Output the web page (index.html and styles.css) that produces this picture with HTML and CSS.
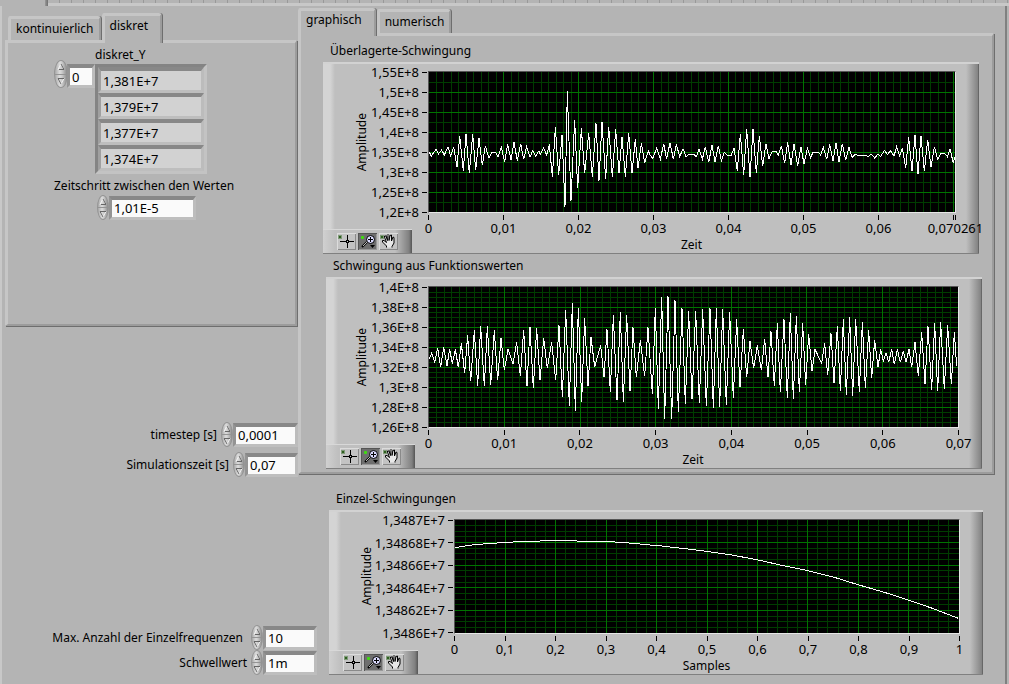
FILE: index.html
```html
<!DOCTYPE html>
<html lang="de">
<head>
<meta charset="utf-8">
<meta name="viewport" content="width=device-width, initial-scale=1">
<title>Schwingungen</title>
<link rel="stylesheet" href="styles.css">
</head>
<body>
<svg class="sprites" aria-hidden="true">
  <symbol id="up" viewBox="0 0 8 8"><path d="M1 6.500L4 1L7 6.500" fill="none" stroke="#f4f4f4"/><path d="M4 1L7 6.500H2" fill="none" stroke="#666"/></symbol>
  <symbol id="down" viewBox="0 0 8 8"><path d="M7 1.500L4 7L1 1.500" fill="none" stroke="#f4f4f4"/><path d="M7 1.500H1L4 7" fill="none" stroke="#666"/></symbol>
  <symbol id="cross" viewBox="0 0 19 17"><rect x="1" y="2" width="4" height="4" fill="#7f9a78"/><rect x="2" y="3" width="2" height="2" fill="#2f5f20"/><path d="M3 8.500H9M12 8.500H17M10.500 2V7M10.500 10V15" stroke="#000"/><rect x="9.500" y="7.500" width="2" height="2" fill="#ccc" stroke="#000"/></symbol>
  <symbol id="zoom" viewBox="0 0 19 17"><path d="M4.500 3V6M3 4.500H6" stroke="#3fdc10" stroke-width="2"/><path d="M4 14L9 9" stroke="#000" stroke-width="2"/><path d="M5 13L9 9" stroke="#bbb"/><circle cx="12.500" cy="6.500" r="4" fill="#dcdcff" stroke="#000"/><path d="M12.500 4V9M10 6.500H15" stroke="#000"/><path d="M12 12H17L14.500 15Z"/></symbol>
  <symbol id="hand" viewBox="0 0 19 17"><rect x="1" y="2" width="4" height="4" fill="#7f9a78"/><rect x="2" y="3" width="2" height="2" fill="#2f5f20"/><path d="M7.500 14.500V13L3.500 9V7.500H5L7.500 9.500L5.500 4V3H7L8.500 7.500L8 2.500L9 1.500L10 2.500V7.500L11 2.500L12.500 2V8L14 4L15 4.500V10L13 13.500V14.500" fill="#e8e8e8" stroke="#000"/></symbol>
</svg>
<div class="strip"><span class="strip-tab"></span><span class="strip-line"></span></div>
<main class="window">
  <div class="upper">
    <section class="left">
      <div class="tabs tabs-left" role="tablist">
        <button class="tab" role="tab" type="button">kontinuierlich</button>
        <button class="tab selected" role="tab" type="button" aria-selected="true">diskret</button>
      </div>
      <div class="page page-left">
        <div class="array">
          <label class="array-title" for="index">diskret_Y</label>
          <div class="spin"><button type="button" aria-label="Index erhöhen"><svg><use href="#up"/></svg></button><button type="button" aria-label="Index verringern"><svg><use href="#down"/></svg></button></div>
          <input class="field w-index" id="index" value="0">
          <div class="cells">
            <input class="cell" aria-label="Wert 0" readonly value="1,381E+7">
            <input class="cell" aria-label="Wert 1" readonly value="1,379E+7">
            <input class="cell" aria-label="Wert 2" readonly value="1,377E+7">
            <input class="cell" aria-label="Wert 3" readonly value="1,374E+7">
          </div>
        </div>
        <label class="step-title" for="step">Zeitschritt zwischen den Werten</label>
        <div class="row row-step">
          <div class="spin"><button type="button" aria-label="Zeitschritt erhöhen"><svg><use href="#up"/></svg></button><button type="button" aria-label="Zeitschritt verringern"><svg><use href="#down"/></svg></button></div>
          <input class="field w-step" id="step" value="1,01E-5">
        </div>
      </div>
      <div class="params">
        <div class="row"><label for="ts">timestep [s]</label>
          <div class="spin"><button type="button" aria-label="timestep erhöhen"><svg><use href="#up"/></svg></button><button type="button" aria-label="timestep verringern"><svg><use href="#down"/></svg></button></div>
          <input class="field w-ts" id="ts" value="0,0001"></div>
        <div class="row"><label for="sim">Simulationszeit [s]</label>
          <div class="spin"><button type="button" aria-label="Simulationszeit erhöhen"><svg><use href="#up"/></svg></button><button type="button" aria-label="Simulationszeit verringern"><svg><use href="#down"/></svg></button></div>
          <input class="field w-sim" id="sim" value="0,07"></div>
      </div>
    </section>
    <section class="right">
      <div class="tabs" role="tablist">
        <button class="tab selected" role="tab" type="button" aria-selected="true">graphisch</button>
        <button class="tab" role="tab" type="button">numerisch</button>
      </div>
      <div class="page page-right">
        <figure class="graph graph-sum">
          <figcaption>Überlagerte-Schwingung</figcaption>
          <div class="frame">
            <span class="y-title">Amplitude</span>
            <ol class="y-axis"><li>1,55E+8</li><li>1,5E+8</li><li>1,45E+8</li><li>1,4E+8</li><li>1,35E+8</li><li>1,3E+8</li><li>1,25E+8</li><li>1,2E+8</li></ol>
            <svg class="plot" id="plot-sum" role="img" aria-label="Überlagerte-Schwingung"></svg>
            <div class="toolbar"><button type="button" aria-label="Cursor"><svg><use href="#cross"/></svg></button><button class="on" type="button" aria-label="Zoom"><svg><use href="#zoom"/></svg></button><button type="button" aria-label="Verschieben"><svg><use href="#hand"/></svg></button></div>
            <div class="x-part">
              <ol class="x-axis"><li><span>0</span></li><li><span>0,01</span></li><li><span>0,02</span></li><li><span>0,03</span></li><li><span>0,04</span></li><li><span>0,05</span></li><li><span>0,06</span></li><li class="rest"><span></span></li><li><span>0,070261</span></li></ol>
              <span class="x-title">Zeit</span>
            </div>
          </div>
        </figure>
        <figure class="graph graph-func">
          <figcaption>Schwingung aus Funktionswerten</figcaption>
          <div class="frame">
            <span class="y-title">Amplitude</span>
            <ol class="y-axis"><li>1,4E+8</li><li>1,38E+8</li><li>1,36E+8</li><li>1,34E+8</li><li>1,32E+8</li><li>1,3E+8</li><li>1,28E+8</li><li>1,26E+8</li></ol>
            <svg class="plot" id="plot-func" role="img" aria-label="Schwingung aus Funktionswerten"></svg>
            <div class="toolbar"><button type="button" aria-label="Cursor"><svg><use href="#cross"/></svg></button><button class="on" type="button" aria-label="Zoom"><svg><use href="#zoom"/></svg></button><button type="button" aria-label="Verschieben"><svg><use href="#hand"/></svg></button></div>
            <div class="x-part">
              <ol class="x-axis"><li><span>0</span></li><li><span>0,01</span></li><li><span>0,02</span></li><li><span>0,03</span></li><li><span>0,04</span></li><li><span>0,05</span></li><li><span>0,06</span></li><li><span>0,07</span></li></ol>
              <span class="x-title">Zeit</span>
            </div>
          </div>
        </figure>
      </div>
    </section>
  </div>
  <div class="lower">
    <div class="params">
      <div class="row"><label class="far" for="max">Max. Anzahl der Einzelfrequenzen</label>
        <div class="spin"><button type="button" aria-label="Anzahl erhöhen"><svg><use href="#up"/></svg></button><button type="button" aria-label="Anzahl verringern"><svg><use href="#down"/></svg></button></div>
        <input class="field w-max" id="max" value="10"></div>
      <div class="row"><label for="limit">Schwellwert</label>
        <div class="spin"><button type="button" aria-label="Schwellwert erhöhen"><svg><use href="#up"/></svg></button><button type="button" aria-label="Schwellwert verringern"><svg><use href="#down"/></svg></button></div>
        <input class="field w-max" id="limit" value="1m"></div>
    </div>
    <figure class="graph graph-single">
      <figcaption>Einzel-Schwingungen</figcaption>
      <div class="frame">
        <span class="y-title">Amplitude</span>
        <ol class="y-axis"><li>1,3487E+7</li><li>1,34868E+7</li><li>1,34866E+7</li><li>1,34864E+7</li><li>1,34862E+7</li><li>1,3486E+7</li></ol>
        <svg class="plot" id="plot-single" role="img" aria-label="Einzel-Schwingungen"></svg>
        <div class="toolbar"><button type="button" aria-label="Cursor"><svg><use href="#cross"/></svg></button><button class="on" type="button" aria-label="Zoom"><svg><use href="#zoom"/></svg></button><button type="button" aria-label="Verschieben"><svg><use href="#hand"/></svg></button></div>
        <div class="x-part">
          <ol class="x-axis"><li><span>0</span></li><li><span>0,1</span></li><li><span>0,2</span></li><li><span>0,3</span></li><li><span>0,4</span></li><li><span>0,5</span></li><li><span>0,6</span></li><li><span>0,7</span></li><li><span>0,8</span></li><li><span>0,9</span></li><li><span>1</span></li></ol>
          <span class="x-title">Samples</span>
        </div>
      </div>
    </figure>
  </div>
</main>
<script src="plots.js"></script>
</body>
</html>
```

FILE: styles.css
```css
* { box-sizing: border-box; }
body {
  margin: 0;
  min-height: 100vh;
  display: flex;
  flex-direction: column;
  background: #b4b4b4;
  color: #000;
  font: 12px/16px "Noto Sans", "DejaVu Sans", sans-serif;
  white-space: nowrap;
}
button, input { font: inherit; color: inherit; margin: 0; }
button { padding: 0; border: 0; background: none; }
ol { list-style: none; margin: 0; padding: 0; }
figure { margin: 0; }
input, .y-axis, .x-axis { font-size: 13px; }
.sprites { display: none; }

/* Edge of the outer tab control */
.strip { display: flex; height: 6px; padding-left: 45px; }
.strip-tab { width: 3px; background: linear-gradient(90deg, #999, #6e6e6e); }
.strip-line {
  flex: 1;
  border-bottom: 3px solid #c8c8c8;
  background: repeating-linear-gradient(90deg, #b4b4b4 0 11px, #999 11px 12px);
}
.window {
  flex: 1;
  display: flex;
  flex-direction: column;
  margin-right: 2px;
  border: solid;
  border-width: 0 2px 1px 2px;
  border-color: #b4b4b4 #808080 #999 #c8c8c8;
}
.upper { display: grid; grid-template-columns: 296px 1fr; padding-right: 10px; }
.left { display: flex; flex-direction: column; padding: 7px 0 0 3px; }
.right { padding-top: 2px; }

/* Tabs */
.tabs { display: flex; align-items: flex-end; height: 25px; }
.tabs-left { height: 27px; padding-left: 3px; }
.tab {
  height: 24px;
  margin-right: 1px;
  padding: 0 5px 2px;
  background: #b4b4b4;
  border: solid;
  border-width: 3px 2px 0 3px;
  border-color: #c6c6c6 #9c9c9c #b4b4b4 #c6c6c6;
  border-radius: 3px 3px 0 0;
  box-shadow: 1px 0 #6e6e6e;
}
.tab.selected { height: 28px; margin-bottom: -3px; padding: 0 12px 8px 5px; position: relative; }
.tabs-left .selected { height: 30px; }
.page {
  margin: 0 1px 1px 0;
  border: solid;
  border-width: 3px 2px 2px 3px;
  border-color: #c6c6c6 #9c9c9c #9c9c9c #c6c6c6;
  box-shadow: 1px 1px #6e6e6e;
}
.page-left { height: 286px; padding: 4px 0 0 46px; }
.page-right { display: flex; flex-direction: column; gap: 4px; padding: 7px 0 3px; }

/* Numeric controls */
.field, .cell {
  height: 24px;
  padding: 0 0 0 2px;
  border: solid;
  border-width: 4px 3px 3px 3px;
  border-color: #888 #bcbcbc #bebebe #949494;
  background: #fafafa;
  outline-offset: -2px;
}
.w-index { width: 28px; }
.w-step { width: 87px; }
.w-ts { width: 65px; }
.w-sim { width: 53px; }
.w-max { width: 54px; }
.spin {
  display: flex;
  flex-direction: column;
  width: 12px;
  height: 25px;
  border: 1px solid #949494;
  border-radius: 50%;
  background: linear-gradient(90deg, #aaa, #dcdcdc 40%, #c8c8c8 60%, #8c8c8c);
  overflow: hidden;
}
.spin button { flex: 1; display: flex; align-items: center; justify-content: center; min-height: 0; }
.spin button + button { border-top: 1px solid #949494; }
.spin svg { width: 8px; height: 8px; }
.row { display: flex; justify-content: flex-end; align-items: center; }
.row label { margin-right: 4px; }
.row .far { margin-right: 8px; }

.array {
  display: grid;
  grid-template-columns: 13px 28px 112px;
  grid-template-rows: 17px auto;
  align-items: start;
}
.array-title { grid-column: 2 / 4; padding-left: 28px; }
.array .spin { width: 14px; height: 28px; margin-top: -4px; }
.cells {
  display: grid;
  padding: 0;
  border: 3px solid;
  border-color: #848484 #c3c3c3 #c3c3c3 #848484;
}
.cell { width: 100%; height: 26px; border-left-color: #a0a0a0; background: #d2d2d2; }
.step-title { display: block; margin: 4px 0 1px; }
.row-step { justify-content: flex-start; padding-left: 43px; }
.left .params { display: grid; gap: 5px; margin-top: 95px; }

/* Graphs */
.graph { display: flex; flex-direction: column; gap: 3px; }
.graph figcaption { padding-left: 7px; }
.graph-sum { margin: 0 13px 0 22px; --axis: 105px; }
.graph-func { margin: 0 10px 0 25px; --axis: 102px; }
.graph-single { --axis: 125px; }
.frame {
  display: grid;
  grid-template-columns: var(--axis) 1fr 23px;
  grid-template-rows: auto 41px;
  padding-top: 9px;
  background:
    linear-gradient(#d2d2d2, #d2d2d2) top / 100% 2px no-repeat,
    linear-gradient(#808080, #808080) bottom / 100% 1px no-repeat,
    linear-gradient(90deg, #d4d4d4 60%, #bfbfbf) left / 12px 100% no-repeat,
    linear-gradient(90deg, #bfbfbf, #848484 90%, #555) right / 13px 100% no-repeat,
    #bfbfbf;
}
.plot {
  grid-area: 1 / 2;
  width: 100%;
  height: 142px;
  border: 1px solid;
  border-color: #555 #e6e6e6 #e6e6e6 #555;
  background: #000;
}
.graph-single .plot { height: 115px; }
.plot path { fill: none; vector-effect: non-scaling-stroke; shape-rendering: crispEdges; }
.plot .minor { stroke: #003c00; }
.plot .major { stroke: #007300; }
.plot .trace { stroke: #fff; }
.y-title {
  grid-area: 1 / 1;
  justify-self: start;
  align-self: center;
  margin-left: 31px;
  writing-mode: vertical-rl;
  transform: rotate(180deg);
}
.graph-func .y-title { margin-left: 28px; }
.graph-single .y-title { margin-left: 30px; }
.y-axis {
  grid-area: 1 / 1;
  justify-self: end;
  display: flex;
  flex-direction: column;
  justify-content: space-between;
  padding: 1px 1px 1px 0;
}
.y-axis li { display: flex; align-items: center; justify-content: flex-end; gap: 3px; height: 0; }
.y-axis li::after { content: ""; width: 5px; height: 1px; background: #000; }
.toolbar {
  grid-area: 2 / 1;
  align-self: end;
  display: flex;
  gap: 2px;
  width: 89px;
  height: 25px;
  padding: 3px 0 0 14px;
  border-top: 1px solid #d8d8d8;
  border-bottom: 1px solid #808080;
  background: linear-gradient(90deg, #d0d0d0, #bfbfbf 12px, #bfbfbf 72px, #808080 86px, #555);
}
.toolbar button {
  width: 19px;
  height: 17px;
  background: #c3c3c3;
  box-shadow: inset 1px 1px #dcdcdc, inset -1px -1px #8a8a8a;
}
.toolbar .on { background: #6e6e6e; box-shadow: inset 1px 1px #555, inset -1px -1px #999; }
.toolbar svg { display: block; width: 19px; height: 17px; }
.x-part { grid-area: 2 / 2; display: flex; flex-direction: column; padding: 2px 1px 0 0; }
.x-axis { display: flex; }
.x-axis li { flex: 1 1 0; width: 0; }
.x-axis li:last-child { flex: 0 0 0; }
.x-axis .rest { flex-grow: 0.026; }
.x-axis span { display: flex; flex-direction: column; align-items: center; width: 1px; }
.x-axis span::before { content: ""; width: 1px; height: 5px; background: #000; }
.x-title { align-self: center; margin-top: 1px; }

.lower {
  flex: 1;
  display: grid;
  grid-template-columns: 315px 1fr;
  gap: 12px;
  padding: 14px 22px 9px 0;
}
.lower .params { align-self: end; }
```

FILE: plots.js
```js
// Each plot: drawing area, grid divisions and the sampled trace segments.
const plots = {
  "plot-sum": {
    box: [327, -144, 1578, 420], x: 7.0261, xSub: 10, y: 7, ySub: 2,
    segments: [
      [0, 0, "328,97 334,108 348,88 355,102 365,90 373,105 384,80 392,108 401,80 411,142 419,48 430,152 438,43 448,160 458,42 467,150 477,55 487,136 496,78 507,115 515,98 527,98 534,112 544,82 554,126 563,73 573,120 582,67 592,122 602,71 611,118 620,80 630,112 638,92 647,108 657,92 661,104 671,84 680,105 688,73 697,170 706,22 716,166 726,45 735,260 742,-86 753,243 764,0 773,205 784,25 794,160 806,40 817,170 828,10 837,182 846,5 857,178 866,20 877,172 887,28 897,160 906,50 916,170 926,40 936,158 946,58 954,145 964,70 974,128 985,92"],
      [990, -240, "0,345 8,355 20,325 31,358 41,311 50,357 60,308 70,357 79,313 89,350 99,326 108,350 117,342 130,342 139,350 147,328 157,358 166,320 176,367 186,316 195,365 205,318 214,362 223,337 232,346 243,348 252,324 262,392 271,281 281,405 290,266 300,412 309,268 319,400 328,287 338,378 348,311 357,356 367,333 377,333 385,346 394,317 404,370 413,307 423,376 432,311 443,378 453,320 462,373 472,325 482,353 489,337 505,337 512,345 520,322 530,358 539,313 549,363 558,308 567,366 577,311 587,360 597,322 606,352 615,343 625,347 645,346 655,350 663,342 674,354 684,342 692,349 704,331 712,344 722,332 732,348 740,320 749,347 757,323 767,385 776,292 786,394 795,286 804,403 813,287 823,394 833,299 843,380 853,320 863,357 873,340 885,342 892,350 900,326 910,370 914,350"]
    ]
  },
  "plot-func": {
    box: [327, 51, 1587, 420], x: 7, xSub: 10, y: 7, ySub: 4,
    segments: [
      [0, 0, "328,266 335,250 344,277 353,235 362,290 371,232 381,287 389,238 397,281 406,238 415,292 424,220 434,310 443,196 452,334 463,181 473,347 482,168 493,349 502,169 512,344 523,181 533,331 543,205 553,301 564,238 579,283 590,217 601,319 611,181 621,349 630,171 640,355 650,175 660,331 671,205 682,295 695,217 707,331 717,166 727,382 737,121 748,407 757,100 766,422 775,115 785,395 794,145 804,349 813,202 824,290 842,226 852,322 861,178 871,367 880,136 891,391 901,127 910,395 920,136 930,364 939,172 949,322 961,211 974,319 984,172 997,373 1006,115 1015,418"],
      [990, 0, "35,82 44,448 54,79 65,448 75,91 85,427 96,115 106,403 116,124 126,388 137,124 148,400 158,118 169,409 180,115 190,415 199,115 209,412 218,118 229,406 239,127 250,385 260,148 270,352 280,178 290,322 300,214 311,295 322,226 334,301 344,208 354,322 363,184 373,349 382,160 391,367 402,148 412,385 421,130 430,388 439,139 448,367 458,160 467,346 476,193 486,304 495,238 515,280 524,220 533,316 543,190 552,340 562,169 571,364 580,148 589,376 599,142 608,379 617,148 628,367 637,157 646,355 656,181 665,325 674,211 684,292 692,238 700,273 708,248 716,277 725,238 733,283 742,238 751,277 760,244 768,277 777,238 785,292 795,217 805,319 815,187 825,343 834,169 845,361 854,160 863,364 872,157 883,358 893,166 904,343 913,187 920,288"]
    ]
  },
  "plot-single": {
    box: [405, 120, 1512, 339], x: 10, xSub: 5, y: 5, ySub: 4,
    segments: [
      [0, 0, "405,203 440,197 475,193 515,190 560,187 620,184 700,182 840,184 905,187 950,191 990,195 1010,196"],
      [990, 0, "60,201 115,207 170,214 240,224 320,239 400,257 470,271 550,291 620,313 700,336 775,360 850,386 925,415"]
    ]
  }
};

function addPath(svg, name, d) {
  const path = document.createElementNS("http://www.w3.org/2000/svg", "path");
  path.setAttribute("class", name);
  path.setAttribute("d", d);
  svg.append(path);
}

for (const [id, plot] of Object.entries(plots)) {
  const svg = document.getElementById(id);
  const [left, top, width, height] = plot.box;
  svg.setAttribute("viewBox", plot.box.join(" "));
  svg.setAttribute("preserveAspectRatio", "none");

  const lines = { minor: "", major: "" };
  for (let i = 1; i < plot.x * plot.xSub; i++) {
    const x = left + (i * width) / (plot.x * plot.xSub);
    lines[i % plot.xSub ? "minor" : "major"] += `M${x} ${top}v${height}`;
  }
  for (let i = 1; i < plot.y * plot.ySub; i++) {
    const y = top + (i * height) / (plot.y * plot.ySub);
    lines[i % plot.ySub ? "minor" : "major"] += `M${left} ${y}h${width}`;
  }
  addPath(svg, "minor", lines.minor);
  addPath(svg, "major", lines.major);

  const points = plot.segments.flatMap(([dx, dy, list]) =>
    list.split(" ").map((pair) => {
      const [x, y] = pair.split(",").map(Number);
      return `${x + dx} ${y + dy}`;
    })
  );
  addPath(svg, "trace", "M" + points.join("L"));
}
```
